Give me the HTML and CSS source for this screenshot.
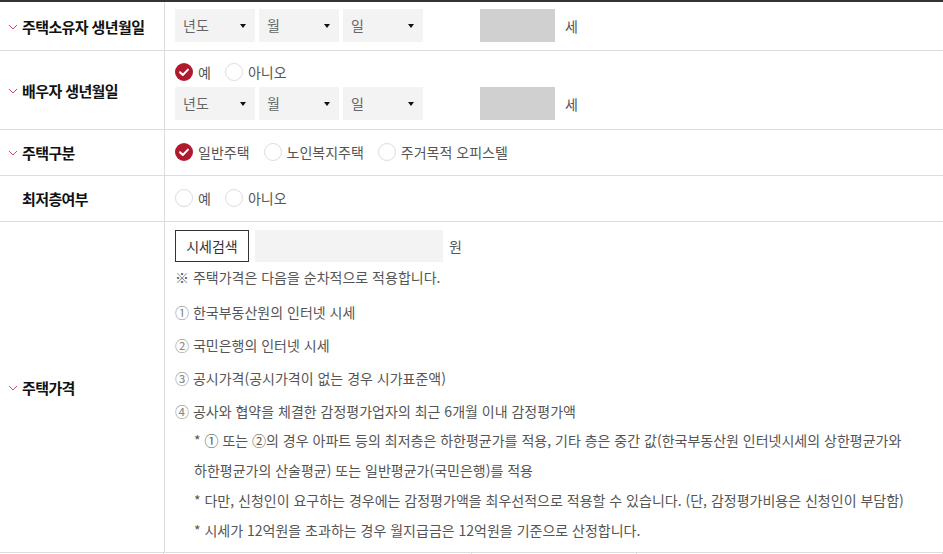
FILE: index.html
```html
<!DOCTYPE html>
<html lang="ko">
<head>
    <meta charset="UTF-8">
    <title>주택정보 입력</title>
    <link rel="stylesheet" href="styles.css">
</head>
<body>
    <table class="form-table">
        <tr class="row-birth">
            <th><span class="req"><svg viewBox="0 0 10 6" width="10" height="6"><path d="M1 1 L5 5 L9 1" fill="none" stroke="#d0384c" stroke-width="0.9"/></svg></span>주택소유자 생년월일</th>
            <td>
                <div class="date-line">
                    <div class="select">년도<i class="arrow"></i></div>
                    <div class="select">월<i class="arrow"></i></div>
                    <div class="select">일<i class="arrow"></i></div>
                    <div class="age-box"></div>
                    <span class="unit">세</span>
                </div>
            </td>
        </tr>
        <tr class="row-spouse">
            <th><span class="req"><svg viewBox="0 0 10 6" width="10" height="6"><path d="M1 1 L5 5 L9 1" fill="none" stroke="#d0384c" stroke-width="0.9"/></svg></span>배우자 생년월일</th>
            <td>
                <div class="radio-line">
                    <label class="radio checked"><span class="dot"><svg viewBox="0 0 18 18" width="18" height="18"><path d="M5 9.2 L7.8 12 L13 6.6" fill="none" stroke="#fff" stroke-width="2" stroke-linecap="round" stroke-linejoin="round"/></svg></span>예</label>
                    <label class="radio"><span class="dot"></span>아니오</label>
                </div>
                <div class="date-line">
                    <div class="select">년도<i class="arrow"></i></div>
                    <div class="select">월<i class="arrow"></i></div>
                    <div class="select">일<i class="arrow"></i></div>
                    <div class="age-box"></div>
                    <span class="unit">세</span>
                </div>
            </td>
        </tr>
        <tr class="row-radio">
            <th><span class="req"><svg viewBox="0 0 10 6" width="10" height="6"><path d="M1 1 L5 5 L9 1" fill="none" stroke="#d0384c" stroke-width="0.9"/></svg></span>주택구분</th>
            <td>
                <div class="radio-line">
                    <label class="radio checked"><span class="dot"><svg viewBox="0 0 18 18" width="18" height="18"><path d="M5 9.2 L7.8 12 L13 6.6" fill="none" stroke="#fff" stroke-width="2" stroke-linecap="round" stroke-linejoin="round"/></svg></span>일반주택</label>
                    <label class="radio"><span class="dot"></span>노인복지주택</label>
                    <label class="radio"><span class="dot"></span>주거목적 오피스텔</label>
                </div>
            </td>
        </tr>
        <tr class="row-radio">
            <th><span class="req"></span>최저층여부</th>
            <td>
                <div class="radio-line">
                    <label class="radio"><span class="dot"></span>예</label>
                    <label class="radio"><span class="dot"></span>아니오</label>
                </div>
            </td>
        </tr>
        <tr class="row-price">
            <th><span class="req"><svg viewBox="0 0 10 6" width="10" height="6"><path d="M1 1 L5 5 L9 1" fill="none" stroke="#d0384c" stroke-width="0.9"/></svg></span>주택가격</th>
            <td>
                <div class="price-line">
                    <button class="btn-search">시세검색</button>
                    <div class="price-box"></div>
                    <span class="unit">원</span>
                </div>
                <p class="note">※ 주택가격은 다음을 순차적으로 적용합니다.</p>
                <ol class="order-list">
                    <li><span class="num">①</span> 한국부동산원의 인터넷 시세</li>
                    <li><span class="num">②</span> 국민은행의 인터넷 시세</li>
                    <li><span class="num">③</span> 공시가격(공시가격이 없는 경우 시가표준액)</li>
                    <li><span class="num">④</span> 공사와 협약을 체결한 감정평가업자의 최근 6개월 이내 감정평가액</li>
                </ol>
                <div class="sub-notes">
                    <p>* ① 또는 ②의 경우 아파트 등의 최저층은 하한평균가를 적용, 기타 층은 중간 값(한국부동산원 인터넷시세의 상한평균가와 하한평균가의 산술평균) 또는 일반평균가(국민은행)를 적용</p>
                    <p>* 다만, 신청인이 요구하는 경우에는 감정평가액을 최우선적으로 적용할 수 있습니다. (단, 감정평가비용은 신청인이 부담함)</p>
                    <p>* 시세가 12억원을 초과하는 경우 월지급금은 12억원을 기준으로 산정합니다.</p>
                </div>
            </td>
        </tr>
    </table>
    <div class="next-row">
        <div></div>
        <div></div>
        <div></div>
        <div></div>
    </div>
</body>
</html>
```

FILE: styles.css
```css
body {
    margin: 0;
    font-family: "Noto Sans CJK KR", "Noto Sans", sans-serif;
    font-size: 14px;
    color: #555;
    background: #fff;
    overflow: hidden;
    word-break: keep-all;
}
.form-table {
    width: 943px;
    border-collapse: collapse;
    border-top: 2px solid #333;
}
.form-table tr {
    border-bottom: 1px solid #ddd;
}
.form-table th {
    width: 156px;
    padding: 0 0 0 8px;
    text-align: left;
    vertical-align: middle;
    font-size: 15px;
    font-weight: bold;
    color: #111;
    letter-spacing: -0.6px;
    border-right: 1px solid #ddd;
    white-space: nowrap;
}
.req {
    display: inline-block;
    width: 14px;
    vertical-align: 3px;
}
.req svg {
    display: block;
}
.form-table td {
    padding: 8px 20px 8px 10px;
    vertical-align: top;
}
.row-birth td {
    padding-top: 7px;
}
.row-spouse td {
    padding-bottom: 9px;
}
.row-radio td {
    padding-top: 9px;
    padding-bottom: 10px;
}
.row-price td {
    padding-bottom: 7px;
}

/* 생년월일 선택 */
.date-line {
    display: flex;
    align-items: center;
    gap: 4px;
}
.row-spouse .date-line {
    margin-top: 2px;
}
.select {
    position: relative;
    width: 72px;
    height: 33px;
    line-height: 33px;
    padding-left: 8px;
    background: #f3f3f3;
    color: #666;
}
.arrow {
    position: absolute;
    right: 9px;
    top: 15px;
    width: 0;
    height: 0;
    border-left: 3px solid transparent;
    border-right: 3px solid transparent;
    border-top: 4px solid #111;
}
.age-box {
    width: 75px;
    height: 33px;
    margin-left: 53px;
    background: #d0d0d0;
}
.unit {
    margin-left: 6px;
    color: #555;
}

/* 라디오 */
.radio-line {
    display: flex;
    align-items: center;
    gap: 14px;
    height: 26px;
}
.radio {
    display: flex;
    align-items: center;
    gap: 5px;
    color: #555;
}
.dot {
    width: 16px;
    height: 16px;
    border: 1px solid #ddd;
    border-radius: 50%;
    background: #fff;
}
.radio.checked .dot {
    width: 18px;
    height: 18px;
    border: none;
    background: #b01a2e;
}
.dot svg {
    display: block;
}

/* 주택가격 */
.price-line {
    display: flex;
    align-items: center;
}
.btn-search {
    width: 74px;
    height: 32px;
    padding: 0;
    border: 1px solid #333;
    background: #fff;
    font-family: inherit;
    font-size: 14px;
    color: #333;
}
.price-box {
    width: 188px;
    height: 32px;
    margin-left: 6px;
    background: #f3f3f3;
}
.note {
    margin: 4px 0 0;
    line-height: 22px;
}
.order-list {
    list-style: none;
    margin: 8px 0 0;
    padding: 0;
    line-height: 33px;
}
.num {
    color: #888;
}
.sub-notes {
    margin-top: -3px;
    padding-left: 19px;
    line-height: 30px;
}
.sub-notes p {
    margin: 0;
}
.next-row {
    display: grid;
    grid-template-columns: 164px 308px 165px 1fr;
    height: 10px;
}
.next-row div {
    border-right: 1px solid #ddd;
}
```
